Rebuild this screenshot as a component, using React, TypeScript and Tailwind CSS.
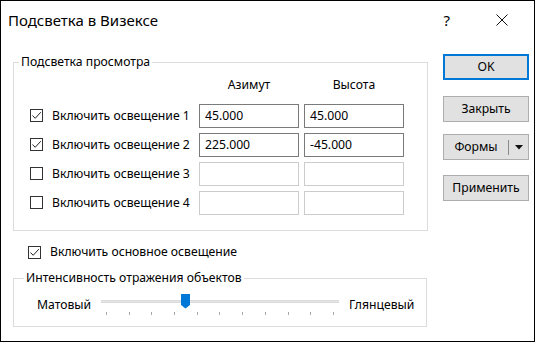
import React from "react";

const font = { fontFamily: '"Noto Sans", "Open Sans", sans-serif' };

function Check({ checked }: { checked: boolean }) {
  return (
    <div className="w-[13px] h-[13px] border border-[#333333] bg-white shrink-0 flex items-center justify-center">
      {checked && (
        <svg width="11" height="11" viewBox="0 0 11 11">
          <polyline points="1.5,5.5 4.2,8.3 9.8,2.2" fill="none" stroke="#222" strokeWidth="1" />
        </svg>
      )}
    </div>
  );
}

function Field({ value, enabled }: { value: string; enabled: boolean }) {
  return (
    <div
      className={
        "h-[24px] w-[100px] border pl-[5px] flex items-center text-[12.2px] text-black bg-white " +
        (enabled ? "border-[#7a7a7a]" : "border-[#cccccc]")
      }
    >
      {value}
    </div>
  );
}

function Row({ label, checked, az, el, first }: { label: string; checked: boolean; az: string; el: string; first?: boolean }) {
  return (
    <div className={"flex items-center h-[24px] " + (first ? "mt-[11px]" : "mt-[5px]")}>
      <div className="w-[169px] flex items-center">
        <Check checked={checked} />
        <span className="ml-[9px] text-[12.2px] text-black">{label}</span>
      </div>
      <Field value={az} enabled={checked} />
      <div className="w-[5px]" />
      <Field value={el} enabled={checked} />
    </div>
  );
}

function Btn({ children, primary }: { children: React.ReactNode; primary?: boolean }) {
  return (
    <div
      className={
        "h-[26px] w-[86px] bg-[#e1e1e1] flex items-center justify-center text-[12.2px] text-black " +
        (primary ? "border-2 border-[#0078d7]" : "border border-[#adadad]")
      }
    >
      {children}
    </div>
  );
}

export default function App() {
  const ticks = Array.from({ length: 11 });
  return (
    <div style={font} className="w-[535px] h-[342px] border border-black bg-white flex flex-col overflow-hidden">
      {/* title bar */}
      <div className="h-[38px] flex items-center shrink-0">
        <span className="ml-[7px] text-[15px] text-black">Подсветка в Визексе</span>
        <span className="ml-auto text-[15px] text-black mr-[46px]">?</span>
        <svg width="12" height="12" viewBox="0 0 12 12" className="mr-[26px]">
          <line x1="0.5" y1="0.5" x2="11.5" y2="11.5" stroke="#111" strokeWidth="1" />
          <line x1="11.5" y1="0.5" x2="0.5" y2="11.5" stroke="#111" strokeWidth="1" />
        </svg>
      </div>

      <div className="flex">
        {/* left column */}
        <div className="ml-[12px] w-[415px] flex flex-col">
          <div className="relative mt-[23px] h-[169px] border border-[#dcdcdc] pt-[14px] pl-[16px]">
            <span className="absolute left-[5px] top-[-9px] px-[2px] bg-white text-[12.2px] leading-[16px] text-black">
              Подсветка просмотра
            </span>
            <div className="flex h-[16px] items-center text-[12.2px] text-black">
              <div className="w-[169px]" />
              <div className="w-[100px] text-center">Азимут</div>
              <div className="w-[5px]" />
              <div className="w-[100px] text-center">Высота</div>
            </div>
            <Row first label="Включить освещение 1" checked az="45.000" el="45.000" />
            <Row label="Включить освещение 2" checked az="225.000" el="-45.000" />
            <Row label="Включить освещение 3" checked={false} az="" el="" />
            <Row label="Включить освещение 4" checked={false} az="" el="" />
          </div>

          <div className="mt-[13px] h-[17px] flex items-center pl-[15px]">
            <Check checked />
            <span className="ml-[9px] text-[12.2px] text-black">Включить основное освещение</span>
          </div>

          <div className="relative mt-[17px] w-[414px] h-[49px] border border-[#dcdcdc] pt-[14px]">
            <span className="absolute left-[10px] top-[-9px] px-[2px] bg-white text-[12.2px] leading-[16px] text-black">
              Интенсивность отражения объектов
            </span>
            <div className="flex items-center h-[24px]">
              <div className="w-[87px] pl-[23px] text-[12.2px] text-black">Матовый</div>
              <div className="relative w-[238px] h-[24px] flex flex-col">
                <div className="mt-[7px] h-[3px] bg-[#e6e6e6] border-y border-[#dadada]" />
                <div className="mt-[9px] flex justify-between pl-[5px] pr-[5px]">
                  {ticks.map((_, i) => (
                    <div key={i} className="w-[1px] h-[3px] bg-[#a8a8a8]" />
                  ))}
                </div>
                <svg width="9" height="15" viewBox="0 0 9 15" className="absolute left-[80px] top-[1px]">
                  <polygon points="0,0 9,0 9,11 4.5,14.5 0,11" fill="#0078d7" />
                </svg>
              </div>
              <div className="ml-[10px] text-[12.2px] text-black">Глянцевый</div>
            </div>
          </div>
        </div>

        {/* right column */}
        <div className="ml-[15px] flex flex-col">
          <div className="mt-[15px]">
            <Btn primary>OK</Btn>
          </div>
          <div className="mt-[16px]">
            <Btn>Закрыть</Btn>
          </div>
          <div className="mt-[12px]">
            <div className="h-[26px] w-[86px] bg-[#e1e1e1] border border-[#adadad] flex items-center text-[12.2px] text-black">
              <div className="w-[64px] text-center">Формы</div>
              <div className="w-[1px] h-[15px] bg-[#8a8a8a]" />
              <div className="flex-1 flex items-center justify-center">
                <svg width="8" height="5" viewBox="0 0 8 5">
                  <polygon points="0,0 8,0 4,4.5" fill="#111" />
                </svg>
              </div>
            </div>
          </div>
          <div className="mt-[15px]">
            <Btn>Применить</Btn>
          </div>
        </div>
      </div>
    </div>
  );
}
